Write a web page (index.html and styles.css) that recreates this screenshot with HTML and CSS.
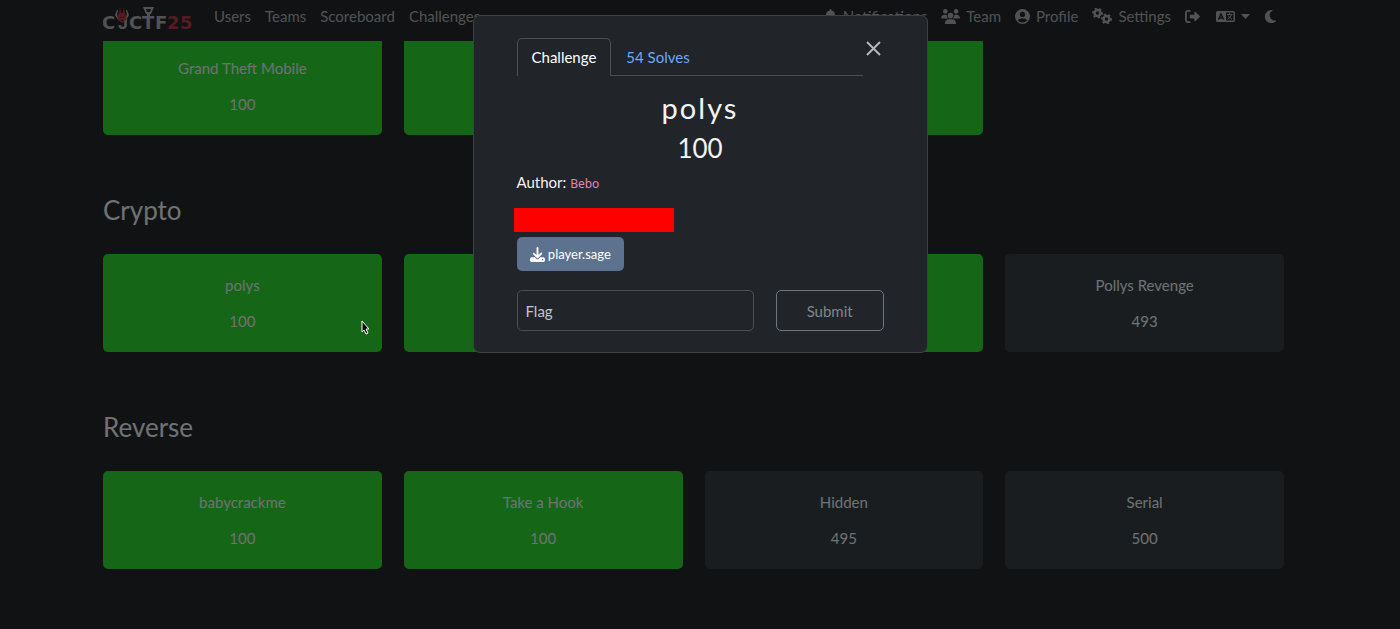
FILE: index.html
```
<!DOCTYPE html>
<html lang="en">

<head>
    <meta charset="UTF-8">
    <meta name="viewport" content="width=device-width, initial-scale=1.0">
    <title>CJCTF25</title>
    <link rel="stylesheet" href="styles.css">
</head>

<body>

    <nav class="navbar">
        <div class="container navbar-inner">
            <a class="brand" href="#">
                <svg width="90" height="32" viewBox="0 -7 90 32">
                    <g class="brand-light">
                        <text x="-1" y="22">C</text>
                        <text class="hook" x="15" y="22">J</text>
                        <text x="26" y="22">C</text>
                        <text x="39" y="22">T</text>
                        <text x="52" y="22">F</text>
                        <path d="M40 0h11l-3 7h-5z M43 2l1 3h3l1-3z" fill-rule="evenodd" />
                        <path d="M44 6h3v4h-3z" />
                        <path d="M14 3l-2 5 3 5 1-1-2-4 1-5z M24 3l2 5-3 5-1-1 2-4-1-5z" />
                    </g>
                    <path class="brand-red" d="M17 0l1 6h2l1-6 1 7 2 1-1 5-4 3-4-3-1-5 2-1z" />
                    <path class="brand-eyes" d="M17 9l1 2h-1z M21 9l-1 2h1z M18 13h2v1h-2z" />
                    <g class="brand-red">
                        <text x="64" y="22">2</text>
                        <text x="77" y="22">5</text>
                    </g>
                </svg>
            </a>
            <div class="nav-group">
                <a href="#">Users</a>
                <a href="#">Teams</a>
                <a href="#">Scoreboard</a>
                <a href="#">Challenges</a>
            </div>
            <div class="nav-group nav-right">
                <a href="#">
                    <svg width="13" height="15" viewBox="0 0 448 512"><path d="M224 0c-18 0-32 14-32 32v19C119 66 64 130 64 208v19c0 47-17 92-48 127l-8 9c-8 9-10 23-5 34s16 19 29 19h384c13 0 24-7 29-19s3-25-5-34l-8-9c-31-35-48-80-48-127v-19c0-78-55-142-128-157V32c0-18-14-32-32-32zm45 493c12-12 19-28 19-45H160c0 17 7 33 19 45s28 19 45 19 33-7 45-19z" /></svg>
                    Notifications
                </a>
                <a href="#">
                    <svg width="19" height="15" viewBox="0 0 640 512"><path d="M144 0a80 80 0 1 1 0 160 80 80 0 1 1 0-160zm368 0a80 80 0 1 1 0 160 80 80 0 1 1 0-160zM0 299c0-59 48-107 107-107h42c16 0 31 4 45 10-1 7-2 14-2 22 0 38 17 72 43 96H21c-12 0-21-10-21-21zm405 21c27-24 43-58 43-96 0-8-1-15-2-22 14-6 29-10 45-10h42c59 0 107 48 107 107 0 12-10 21-21 21zM224 224a96 96 0 1 1 192 0 96 96 0 1 1-192 0zm-96 261c0-73 60-133 133-133h118c73 0 133 60 133 133 0 15-12 27-27 27H155c-15 0-27-12-27-27z" /></svg>
                    Team
                </a>
                <a href="#">
                    <svg width="15" height="15" viewBox="0 0 512 512"><path fill-rule="evenodd" d="M256 0a256 256 0 1 0 0 512 256 256 0 1 0 0-512zm0 96a88 88 0 1 1 0 176 88 88 0 1 1 0-176zM96 388c22-42 66-68 112-68h96c46 0 90 26 112 68-38 47-95 76-160 76S134 435 96 388z" /></svg>
                    Profile
                </a>
                <a href="#">
                    <svg class="gears" width="20" height="16" viewBox="0 0 40 32">
                        <circle cx="11" cy="10" r="6" />
                        <circle class="teeth" cx="11" cy="10" r="9" />
                        <circle cx="29" cy="22" r="6" />
                        <circle class="teeth" cx="29" cy="22" r="9" />
                    </svg>
                    Settings
                </a>
                <a href="#" aria-label="Logout">
                    <svg width="15" height="15" viewBox="0 0 512 512"><path d="M160 32H96C43 32 0 75 0 128v256c0 53 43 96 96 96h64c18 0 32-14 32-32s-14-32-32-32H96c-18 0-32-14-32-32V128c0-18 14-32 32-32h64c18 0 32-14 32-32s-14-32-32-32zM502 273L370 405c-20 20-54 6-54-23v-62H192c-18 0-32-14-32-32v-64c0-18 14-32 32-32h124v-62c0-29 34-43 54-23l132 132c10 9 10 25 0 34z" /></svg>
                </a>
                <a class="lang" href="#" aria-label="Language">
                    <svg width="19" height="15" viewBox="0 0 38 30">
                        <path fill-rule="evenodd" d="M3 4h32q3 0 3 3v16q0 3-3 3H3q-3 0-3-3V7q0-3 3-3zm17 3v16h15V7z" />
                        <path class="glyph-a" d="M5 21l5-11 5 11M7 18h6" />
                        <path class="glyph-b" d="M22 11h11M27 8v3M31 11q-2 7-8 9M24 13q3 5 8 7" />
                    </svg>
                    <svg width="9" height="5" viewBox="0 0 9 5"><path d="M0 0h9L4.500 5z" /></svg>
                </a>
                <a href="#" aria-label="Theme">
                    <svg width="13" height="15" viewBox="0 0 384 512"><path d="M224 32C100 32 0 132 0 256s100 224 224 224c61 0 116-24 156-64 5-5 6-12 3-18s-9-9-16-8c-10 2-20 3-30 3-97 0-175-79-175-176 0-66 36-123 90-153 6-3 9-10 8-16s-7-11-14-12c-7-2-14-4-22-4z" /></svg>
                </a>
            </div>
        </div>
    </nav>

    <main class="container board">
        <section class="category">
            <div class="cards">
                <button class="card solved"><span>Grand Theft Mobile</span><span>100</span></button>
                <button class="card solved"></button>
                <button class="card solved"></button>
            </div>
        </section>

        <section class="category">
            <h3>Crypto</h3>
            <div class="cards">
                <button class="card solved"><span>polys</span><span>100</span></button>
                <button class="card solved"></button>
                <button class="card solved"></button>
                <button class="card"><span>Pollys Revenge</span><span>493</span></button>
            </div>
        </section>

        <section class="category">
            <h3>Reverse</h3>
            <div class="cards">
                <button class="card solved"><span>babycrackme</span><span>100</span></button>
                <button class="card solved"><span>Take a Hook</span><span>100</span></button>
                <button class="card"><span>Hidden</span><span>495</span></button>
                <button class="card"><span>Serial</span><span>500</span></button>
            </div>
        </section>
    </main>

    <div class="backdrop">
        <div class="modal" role="dialog" aria-labelledby="challenge-name">
            <div class="modal-top">
                <div class="tabs">
                    <button class="tab active">Challenge</button>
                    <button class="tab">54 Solves</button>
                </div>
                <button class="close" aria-label="Close">
                    <svg width="15" height="15" viewBox="0 0 15 15"><path d="M1 1l13 13M14 1L1 14" /></svg>
                </button>
            </div>

            <h2 id="challenge-name">polys</h2>
            <p class="value">100</p>
            <p class="author">Author: <code>Bebo</code></p>
            <div class="redacted"></div>

            <form class="modal-grid">
                <a class="download" href="#">
                    <svg width="15" height="15" viewBox="0 0 512 512"><path fill-rule="evenodd" d="M288 32c0-18-14-32-32-32s-32 14-32 32v243l-73-74c-13-12-33-12-46 0s-12 33 0 46l128 128c13 12 33 12 46 0l128-128c12-13 12-33 0-46s-33-12-46 0l-73 74V32zM64 352c-35 0-64 29-64 64v32c0 35 29 64 64 64h384c35 0 64-29 64-64v-32c0-35-29-64-64-64H347l-46 45c-25 25-65 25-90 0l-46-45H64zm368 56a24 24 0 1 1 0 48 24 24 0 1 1 0-48z" /></svg>
                    player.sage
                </a>
                <input class="flag" type="text" placeholder="Flag" aria-label="Flag">
                <button class="submit" type="button">Submit</button>
            </form>
        </div>
    </div>

    <svg class="cursor" width="9" height="15" viewBox="0 0 9 15"><path d="M1 1v11l2-2 2 4 2-1-2-4h3z" /></svg>

</body>

</html>
```
FILE: styles.css
```
* {
    box-sizing: border-box;
}

body {
    margin: 0;
    padding-right: 13px;
    background: #212529;
    color: #dee2e6;
    font-family: Lato, "Liberation Sans", sans-serif;
    font-size: 15px;
    line-height: 22px;
}

h2,
h3,
p {
    margin: 0;
    font-weight: 400;
}

a {
    color: inherit;
    text-decoration: none;
}

button,
input {
    font: inherit;
    color: inherit;
}

svg {
    flex: none;
    fill: currentColor;
}

.container {
    width: 86%;
    max-width: 1181px;
    margin: 0 auto;
}

/* navbar */
.navbar {
    position: fixed;
    top: 0;
    left: 0;
    right: 0;
    padding-right: 13px;
    background: #212529;
    color: #a3a4a6;
}

.navbar-inner {
    display: flex;
    align-items: center;
    padding-bottom: 9px;
}

.brand {
    display: flex;
    margin-right: 14px;
}

.brand text {
    font-family: "DejaVu Sans", sans-serif;
    font-size: 18px;
    font-weight: 700;
}

.brand .hook {
    font-family: "Liberation Sans", sans-serif;
}

.brand-light {
    fill: #a3a4a6;
}

.brand-red {
    fill: #a83840;
}

.brand-eyes {
    fill: #212529;
}

.nav-group {
    display: flex;
    align-items: center;
}

.nav-group a {
    display: flex;
    align-items: center;
    gap: 6px;
    padding: 0 7px;
}

.nav-right {
    margin-left: auto;
}

.gears {
    fill: none;
    stroke: currentColor;
    stroke-width: 5;
}

.gears .teeth {
    stroke-width: 4;
    stroke-dasharray: 4 5;
}

.lang {
    margin-left: 2px;
}

.glyph-a,
.glyph-b {
    fill: none;
    stroke: #212529;
    stroke-width: 3;
}

.glyph-b {
    stroke: currentColor;
    stroke-width: 2;
}

/* challenge board */
.board {
    padding-top: 37px;
}

.category {
    margin-bottom: 58px;
}

.category h3 {
    margin-bottom: 27px;
    font-size: 26px;
    line-height: 34px;
}

.cards {
    display: grid;
    grid-template-columns: repeat(4, 1fr);
    gap: 22px;
}

.card {
    display: flex;
    flex-direction: column;
    align-items: center;
    justify-content: center;
    gap: 14px;
    min-height: 98px;
    padding: 20px;
    border: 0;
    border-radius: 5px;
    background: #343a40;
}

.card.solved {
    background: #2ace2e;
}

/* modal */
.backdrop {
    position: fixed;
    inset: 0;
    padding-top: 15px;
    background: rgba(0, 0, 0, 0.5);
}

.modal {
    width: 455px;
    margin: 0 auto;
    padding: 22px 43px 21px;
    border: 1px solid #3d4145;
    border-radius: 7px;
    background: #212529;
}

.modal-top {
    display: flex;
    align-items: flex-start;
}

.tabs {
    display: flex;
    flex: 1;
    border-bottom: 1px solid #495057;
}

.tab {
    margin-bottom: -1px;
    padding: 7px 14px 8px;
    border: 1px solid transparent;
    border-bottom: 0;
    border-radius: 5px 5px 0 0;
    background: none;
    color: #6ea8fe;
}

.tab.active {
    border-color: #495057;
    background: #212529;
    color: #fff;
}

.close {
    display: flex;
    padding: 3px;
    border: 0;
    background: none;
}

.close svg {
    stroke: #b4b6b8;
    stroke-width: 2;
}

.modal h2 {
    margin-top: 12px;
    color: #f1f3f5;
    font-size: 29px;
    line-height: 40px;
    letter-spacing: 2px;
    text-align: center;
}

.value {
    color: #f1f3f5;
    font-size: 26px;
    line-height: 41px;
    text-align: center;
}

.author {
    margin-top: 2px;
    color: #f1f3f5;
}

.author code {
    color: #e685b5;
    font-family: "Noto Sans", sans-serif;
    font-size: 12px;
}

.redacted {
    width: 160px;
    height: 24px;
    margin: 13px 0 5px -3px;
    background: #f00;
}

.modal-grid {
    display: grid;
    grid-template-columns: repeat(12, 1fr);
    gap: 19px 22px;
}

.download {
    grid-column: 1 / span 4;
    display: flex;
    align-items: center;
    justify-content: center;
    gap: 3px;
    height: 34px;
    border-radius: 5px;
    background: #5c728f;
    color: #fff;
    font-size: 13px;
}

.flag {
    grid-column: 1 / span 8;
    min-width: 0;
    height: 41px;
    padding: 0 8px;
    border: 1px solid #495057;
    border-radius: 5px;
    background: #212529;
}

.flag::placeholder {
    color: #c2c5c9;
    opacity: 1;
}

.submit {
    grid-column: span 4;
    border: 1px solid #6c757d;
    border-radius: 5px;
    background: none;
    color: #7f8589;
}

/* mouse pointer */
.cursor {
    position: absolute;
    left: 361px;
    top: 320px;
    fill: #000;
    stroke: #fff;
}
```
